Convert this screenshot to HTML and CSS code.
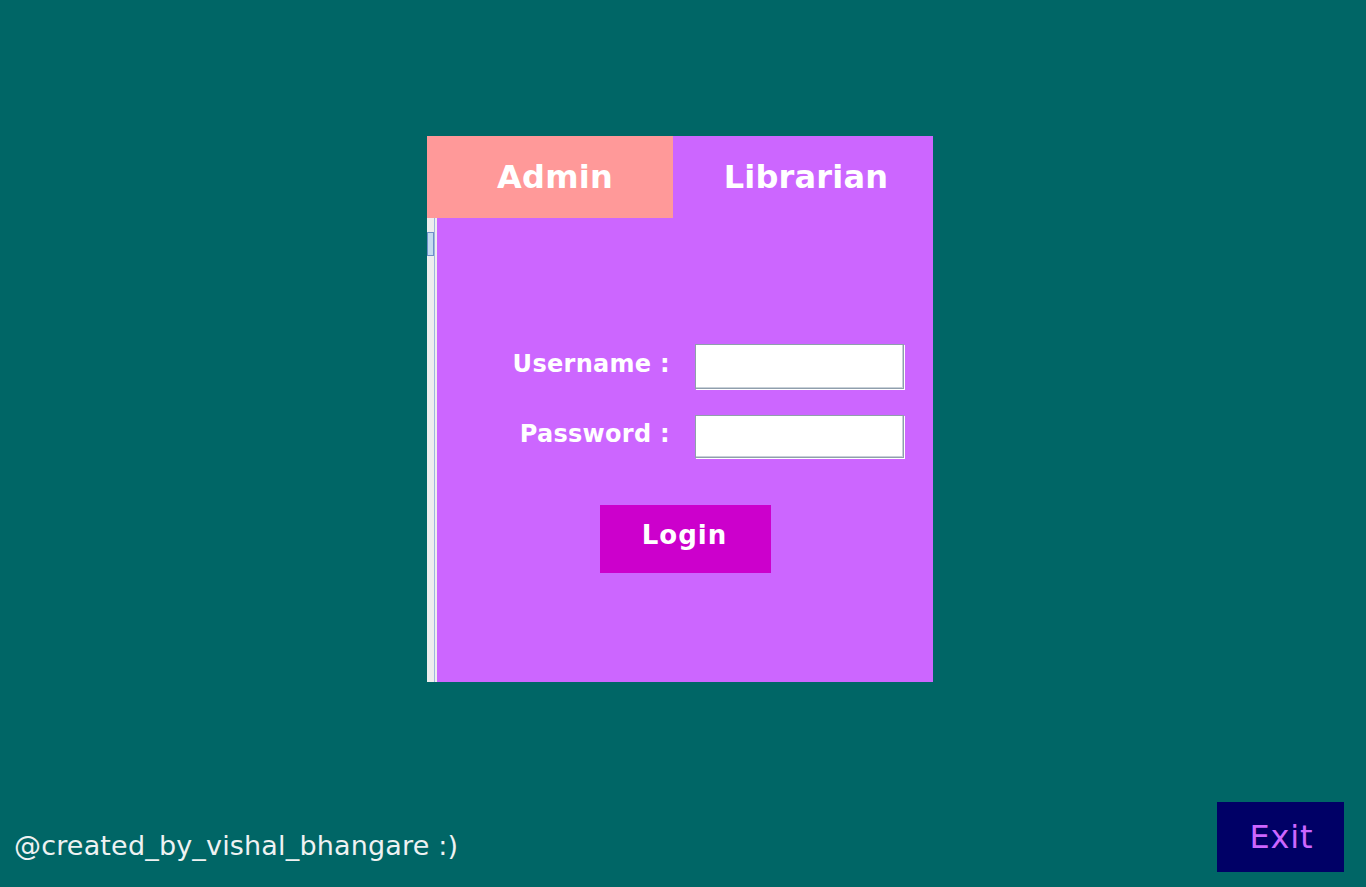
FILE: index.html
```html
<!DOCTYPE html>
<html lang="en">
<head>
<meta charset="utf-8">
<title>Library Login</title>
<link rel="stylesheet" href="styles.css">
</head>
<body>
<main class="stage">
  <section class="panel">
    <div class="tabs">
      <div class="tab tab-admin">Admin</div>
      <div class="tab tab-lib">Librarian</div>
    </div>
    <div class="panel-body">
      <div class="strip"><div class="thumb"></div></div>
      <div class="content">
        <div class="field">
          <label class="label" for="user">Username :</label>
          <input class="input input-user" id="user" type="text">
        </div>
        <div class="field field-pass">
          <label class="label" for="pass">Password :</label>
          <input class="input input-pass" id="pass" type="password">
        </div>
        <button class="login" type="button">Login</button>
      </div>
    </div>
  </section>
</main>
<footer class="footer">
  <span class="credit">@created_by_vishal_bhangare :)</span>
  <button class="exit" type="button">Exit</button>
</footer>
</body>
</html>
```
FILE: styles.css
```css
html, body {
  margin: 0;
  padding: 0;
}
body {
  width: 1366px;
  height: 887px;
  background: #006666;
  font-family: "DejaVu Sans", "Liberation Sans", sans-serif;
  display: flex;
  flex-direction: column;
  overflow: hidden;
}
.stage {
  flex: 1;
  padding: 136px 0 0 427px;
}
.panel {
  width: 506px;
  height: 546px;
  display: flex;
  flex-direction: column;
}
.tabs {
  display: flex;
  height: 82px;
}
.tab {
  display: flex;
  align-items: center;
  justify-content: center;
  color: #ffffff;
  font-weight: bold;
  font-size: 32px;
  letter-spacing: 0.2px;
}
.tab-admin {
  width: 246px;
  background: #ff9999;
  padding-left: 10px;
  box-sizing: border-box;
}
.tab-lib {
  flex: 1;
  background: #cc66ff;
  padding-left: 6px;
}
.panel-body {
  flex: 1;
  display: flex;
}
.strip {
  width: 7px;
  background: #eeeeee;
  border-right: 1px solid #9fb4e0;
  margin-right: 2px;
  box-shadow: 2px 0 0 #eeeeee;
  padding-top: 14px;
}
.thumb {
  width: 5px;
  height: 22px;
  background: #c4dcef;
  border: 1px solid #6f8fc8;
}
.content {
  flex: 1;
  background: #cc66ff;
  padding-top: 126px;
  display: flex;
  flex-direction: column;
}
.field {
  display: flex;
  align-items: center;
}
.field-pass {
  margin-top: 26px;
}
.label {
  width: 233px;
  margin-right: 25px;
  text-align: right;
  color: #ffffff;
  font-weight: bold;
  font-size: 24px;
  letter-spacing: 0.3px;
  padding-bottom: 5px;
}
.input {
  width: 209px;
  box-sizing: border-box;
  margin: 0;
  padding: 0 4px;
  background: #ffffff;
  border: 1px solid #8f9fac;
  box-shadow: inset -1px -1px 0 #c8d0d8, 1px 1px 0 #ffffff;
  outline: none;
}
.input-user {
  height: 45px;
}
.input-pass {
  height: 43px;
}
.login {
  align-self: flex-start;
  margin: 47px 0 0 163px;
  width: 171px;
  height: 68px;
  background: #cc00cc;
  border: none;
  color: #ffffff;
  font-family: "DejaVu Sans", sans-serif;
  font-weight: bold;
  font-size: 26px;
  letter-spacing: 1px;
  padding: 0 2px 8px 0;
}
.footer {
  display: flex;
  justify-content: space-between;
  align-items: flex-end;
  padding: 0 22px 15px 14px;
}
.credit {
  color: #eef2f2;
  font-size: 27px;
  letter-spacing: 0.17px;
  line-height: 32px;
  margin-bottom: 10px;
}
.exit {
  width: 127px;
  height: 70px;
  background: #000066;
  border: none;
  color: #cc66ff;
  font-family: "DejaVu Sans", sans-serif;
  font-size: 32px;
  letter-spacing: 0.8px;
  padding: 0 0 0 2px;
}
```
